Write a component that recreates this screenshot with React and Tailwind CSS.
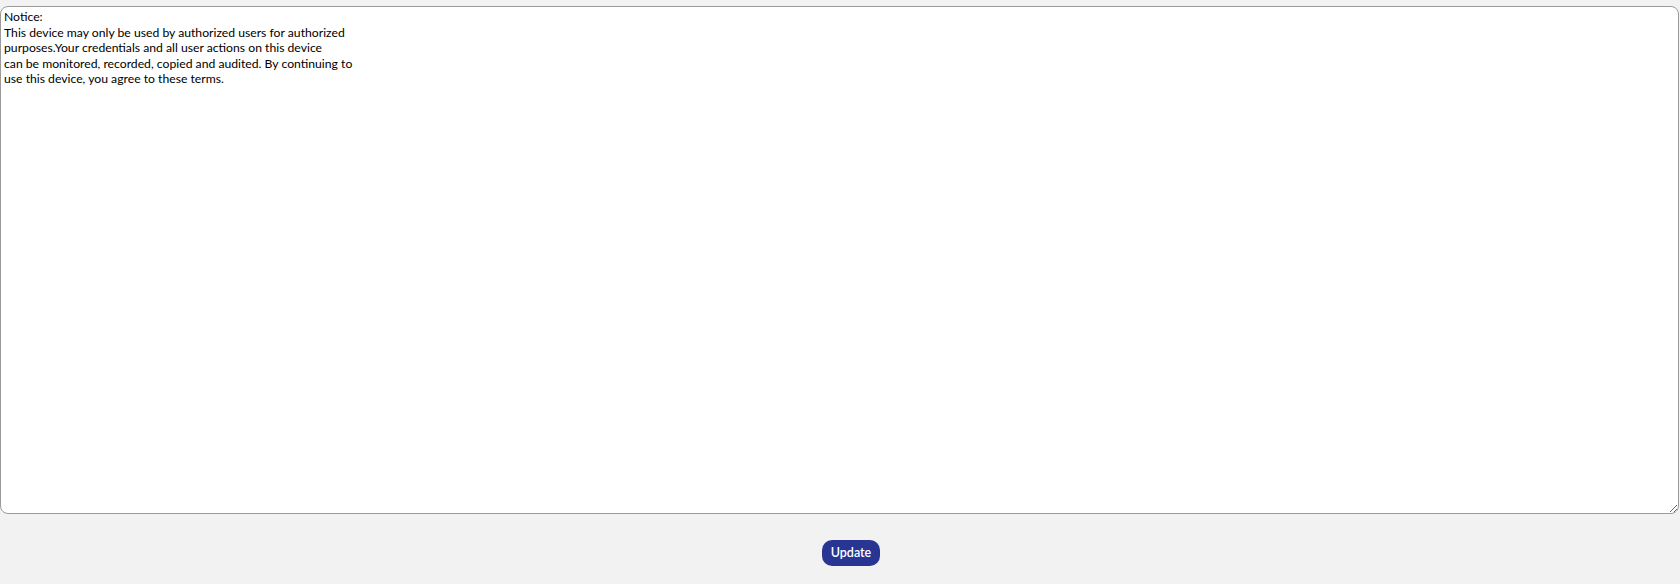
import React from 'react';

const notice = `Notice:
This device may only be used by authorized users for authorized
purposes.Your credentials and all user actions on this device
can be monitored, recorded, copied and audited. By continuing to
use this device, you agree to these terms.`;

export default function App() {
    return (
        <div className="min-h-[584px] w-full bg-[#f2f2f2] pt-[6px] font-['Lato','Open_Sans',sans-serif]">
            {/* Banner text */}
            <textarea
                defaultValue={notice}
                className="block h-[508px] w-[1679px] resize rounded-[8px] border border-[#9a9a9a] bg-white px-[3px] py-[2px] text-[12.2px] leading-[15.5px] text-black outline-none"
            />
            <div className="flex justify-center pl-[22px] pt-[26px]">
                <button className="h-[26px] w-[58px] rounded-[10px] bg-[#283593] text-[12.5px] font-semibold text-white">
                    Update
                </button>
            </div>
        </div>
    );
}
